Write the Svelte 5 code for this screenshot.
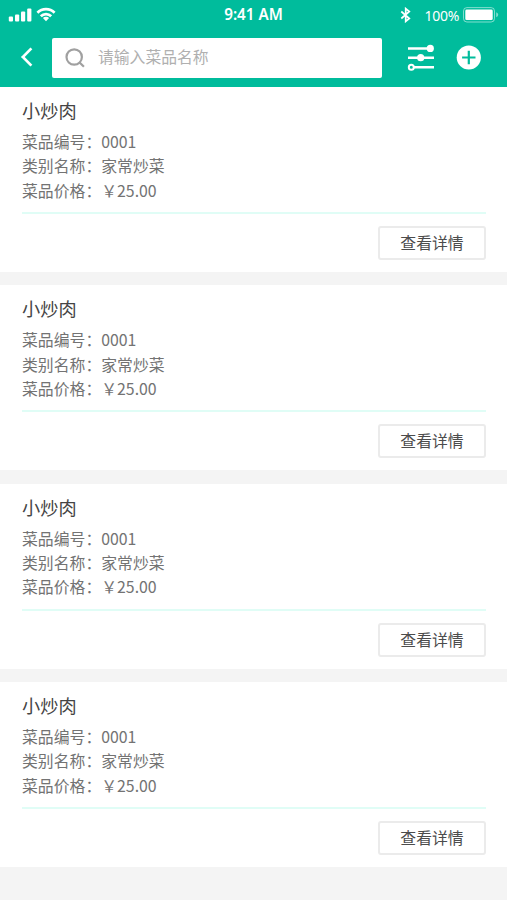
<script lang="ts">
  let keyword = "";

  const dishes = Array.from({ length: 4 }, (_, id) => ({
    id,
    name: "小炒肉",
    code: "0001",
    category: "家常炒菜",
    price: "25.00"
  }));
</script>

<main>
  <header>
    <div class="status-bar">
      <div class="status-left">
        <svg width="24" height="14" viewBox="0 0 24 14" fill="#fff">
          <rect x="0.8" y="8.6" width="4.2" height="4.9" rx="1" />
          <rect x="7" y="6.4" width="4.2" height="7.1" rx="1" />
          <rect x="13" y="3.5" width="4.2" height="10" rx="1" />
          <rect x="19.2" y="0.4" width="4.2" height="13.1" rx="1" />
        </svg>
        <svg width="20" height="15" viewBox="0 0 20 15" fill="none" stroke="#fff" stroke-width="2.7">
          <path d="M1.4 5.7a12.2 12.2 0 0 1 17.2 0" />
          <path d="M4.8 9.2a7.4 7.4 0 0 1 10.4 0" />
          <path d="M10 14.2L6.9 11a4.4 4.4 0 0 1 6.2 0z" fill="#fff" stroke="none" />
        </svg>
      </div>
      <span class="time">9:41 AM</span>
      <div class="status-right">
        <svg class="bluetooth" width="12" height="16" viewBox="0 0 12 16" fill="none" stroke="#fff" stroke-width="1.7">
          <path d="M1.3 4.5l8 7L5.7 14.4V1.6l3.6 2.9-8 7" />
        </svg>
        <span class="percent">100%</span>
        <svg class="battery" width="36" height="16" viewBox="0 0 36 16">
          <rect x="0.5" y="0.6" width="31" height="14.4" rx="3.4" fill="none" stroke="#fff" stroke-opacity="0.5" />
          <rect x="2.3" y="2.5" width="27.4" height="10.6" rx="1.4" fill="#fff" />
          <path d="M33.2 5.3v5q2-.9 2-2.5t-2-2.5z" fill="#fff" fill-opacity="0.5" />
        </svg>
      </div>
    </div>

    <div class="nav-bar">
      <button type="button" class="back" aria-label="返回">
        <svg width="14" height="22" viewBox="0 0 14 22" fill="none" stroke="#fff" stroke-width="2.7">
          <path d="M11.4 2.4L2.8 11l8.6 8.6" />
        </svg>
      </button>
      <label class="search">
        <svg width="20" height="20" viewBox="0 0 20 20" fill="none" stroke="#a0a0a0" stroke-width="2.2">
          <circle cx="9.2" cy="9" r="7.7" />
          <path d="M14.6 14.4l4.3 4.4" />
        </svg>
        <input type="text" placeholder="请输入菜品名称" bind:value={keyword} />
      </label>
      <button type="button" class="filter" aria-label="筛选">
        <svg width="28" height="28" viewBox="0 0 28 28" fill="#fff" stroke="#fff" stroke-width="2.4">
          <path d="M1 5.5h25M1 14.8h26M6 24.3h21" />
          <circle cx="23.3" cy="5.4" r="3.6" stroke="none" />
          <circle cx="13.7" cy="14.7" r="3.6" stroke="none" />
          <circle cx="4.3" cy="24.3" r="2.5" fill="none" stroke-width="2" />
        </svg>
      </button>
      <button type="button" class="add" aria-label="新增">
        <svg width="25" height="25" viewBox="0 0 25 25">
          <circle cx="12.8" cy="12.5" r="12.1" fill="#fff" />
          <path d="M6.1 12.5h13.4M12.8 5.8v13.4" stroke="#00bc9c" stroke-width="2.2" />
        </svg>
      </button>
    </div>
  </header>

  {#each dishes as dish (dish.id)}
    <section class="card">
      <div class="info">
        <h2>{dish.name}</h2>
        <p>菜品编号：{dish.code}</p>
        <p>类别名称：{dish.category}</p>
        <p>菜品价格：￥{dish.price}</p>
      </div>
      <div class="actions">
        <button type="button" class="detail">查看详情</button>
      </div>
    </section>
  {/each}
</main>

<style>
  :global(body) {
    background: #f4f4f4;
  }

  main {
    height: 900px;
    overflow: hidden;
    background: #f4f4f4;
    font-family: "Noto Sans CJK SC", "Noto Sans", sans-serif;
  }

  svg {
    display: block;
    flex: none;
  }

  button {
    padding: 0;
    border: none;
    background: none;
    font-family: inherit;
    cursor: pointer;
  }

  header {
    height: 87px;
    background: #00bc9c;
    color: #fff;
  }

  .status-bar {
    display: grid;
    grid-template-columns: 1fr auto 1fr;
    align-items: center;
    height: 30px;
    padding: 0 8px;
  }

  .status-left,
  .status-right {
    display: flex;
    align-items: center;
  }

  .status-left {
    gap: 4px;
  }

  .status-left svg {
    margin-top: -1px;
  }

  .status-right {
    justify-content: flex-end;
  }

  .bluetooth {
    margin-top: -1px;
  }

  .time {
    margin-top: -2px;
    font: 600 15.2px/28px "Noto Sans", sans-serif;
  }

  .percent {
    margin: 2px 4px 0 13px;
    font: 14px/20px "Noto Sans", sans-serif;
    letter-spacing: -0.3px;
  }

  .nav-bar {
    display: flex;
    align-items: center;
    height: 40px;
    margin-top: 8px;
    padding: 0 25px 0 20px;
  }

  .back,
  .filter,
  .add {
    margin-bottom: 2px;
  }

  .search {
    display: flex;
    align-items: center;
    gap: 13px;
    box-sizing: border-box;
    width: 330px;
    height: 40px;
    margin: 0 25px 0 18px;
    padding: 0 13px;
    background: #fff;
    border-radius: 2px;
  }

  input {
    flex: 1;
    min-width: 0;
    padding: 0 0 2px;
    border: none;
    outline: none;
    font: 15.8px/24px "Noto Sans CJK SC", sans-serif;
    color: #555;
  }

  input::placeholder {
    color: #b0b0b0;
  }

  .add {
    margin-left: 21px;
  }

  .card {
    box-sizing: border-box;
    height: 185px;
    margin-bottom: 13.4px;
    padding: 11px 21px 0 22px;
    background: #fff;
  }

  .info {
    box-sizing: border-box;
    height: 116px;
    border-bottom: 2px solid #e0fdf6;
  }

  h2 {
    margin: 0 0 7px;
    font-size: 18.2px;
    font-weight: 400;
    line-height: 25px;
    color: #444;
  }

  p {
    margin: 0;
    font-size: 15.85px;
    line-height: 24.3px;
    color: #737373;
  }

  .actions {
    display: flex;
    justify-content: flex-end;
    padding-top: 12px;
  }

  .detail {
    box-sizing: border-box;
    width: 108px;
    height: 34px;
    border: 2px solid #ebebeb;
    border-radius: 3px;
    font-size: 15.85px;
    line-height: 28px;
    color: #4c4c4c;
  }
</style>
